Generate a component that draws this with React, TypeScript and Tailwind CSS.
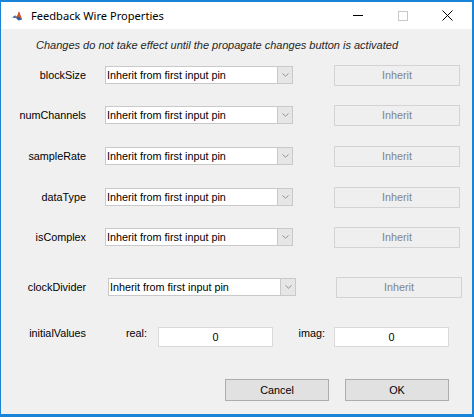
import React from "react";

const rows = [
  { label: "blockSize", mt: "mt-[13px]", shift: false },
  { label: "numChannels", mt: "mt-[19px]", shift: false },
  { label: "sampleRate", mt: "mt-[20px]", shift: false },
  { label: "dataType", mt: "mt-[20px]", shift: false },
  { label: "isComplex", mt: "mt-[19px]", shift: false },
  { label: "clockDivider", mt: "mt-[29px]", shift: true },
];

function Chevron() {
  return (
    <svg width="7" height="4" viewBox="0 0 7 4" className="block">
      <path d="M0.5 0.5 L3.5 3.2 L6.5 0.5" fill="none" stroke="#8a8a8a" strokeWidth="0.9" />
    </svg>
  );
}

function Select() {
  return (
    <div className="flex h-[18px] w-[188px] mt-[-1px] border border-[#c9c9c9] bg-white">
      <div className="flex-1 pl-[1px] leading-[16px] text-black">Inherit from first input pin</div>
      <div className="w-[15px] h-full bg-[#e6e6e6] border-l border-[#c9c9c9] flex items-center justify-center">
        <Chevron />
      </div>
    </div>
  );
}

export default function App() {
  return (
    <div
      className="w-[474px] h-[417px] bg-[#f0f0f0] border-[#1883d7] border-l border-t-2 border-r-2 border-b-[3px] flex flex-col text-[10.8px]"
      style={{ fontFamily: '"Liberation Sans", Arial, sans-serif' }}
    >
      {/* title bar */}
      <div className="h-[27px] bg-white flex items-center shrink-0">
        <div className="ml-[11px] w-[10px] h-[10px]">
          <svg width="10" height="10" viewBox="0 0 10 10" className="block">
            <path d="M0 6.5 L3 4.5 L5 5.5 L7 0.5 L10 8.5 L6.5 9.5 L4 7 Z" fill="#2c5fa8" />
            <path d="M5 5.5 L7 0.5 L10 8.5 L7.2 6 Z" fill="#e2561a" />
            <path d="M3 4.5 L5 5.5 L4 7 Z" fill="#f08a2a" />
          </svg>
        </div>
        <div
          className="ml-[9px] text-[11.1px] text-black leading-[16px]"
          style={{ fontFamily: '"Noto Sans", "Open Sans", sans-serif' }}
        >
          Feedback Wire Properties
        </div>
        <div className="flex-1" />
        <div className="w-[10px] h-[1px] bg-black mr-[35px]" />
        <div className="w-[10px] h-[10px] border border-[#c8c8c8] mr-[34px]" />
        <svg width="11" height="11" viewBox="0 0 11 11" className="block mr-[19px]">
          <path d="M0.5 0.5 L10.5 10.5 M10.5 0.5 L0.5 10.5" stroke="#000" strokeWidth="1" />
        </svg>
      </div>

      {/* subtitle */}
      <div className="mt-[10px] h-[13px] leading-[13px] pl-[35px] italic text-[11px] text-[#262626]">
        Changes do not take effect until the propagate changes button is activated
      </div>

      {rows.map((r) => (
        <div key={r.label} className={`flex items-center h-[21px] ${r.mt}`}>
          <div className="w-[85px] text-right text-black leading-[13px] mt-[-1px]">{r.label}</div>
          <div className={r.shift ? "ml-[22px]" : "ml-[19px]"}>
            <Select />
          </div>
          <div
            className={`${r.shift ? "ml-[40px]" : "ml-[41px]"} w-[126px] h-[21px] border border-[#d3d3d3] bg-[#efefef] text-[#838383] flex items-center justify-center`}
          >
            Inherit
          </div>
        </div>
      ))}

      {/* initialValues */}
      <div className="flex items-start mt-[29px] h-[20px]">
        <div className="w-[85px] text-right text-black leading-[13px]">initialValues</div>
        <div className="w-[72px] text-right pr-[11px] text-black leading-[13px]">real:</div>
        <div className="w-[115px] h-[20px] border border-[#d9d9d9] bg-white flex items-center justify-center text-black">
          0
        </div>
        <div className="w-[61px] text-right pr-[9px] text-black leading-[13px]">imag:</div>
        <div className="w-[115px] h-[20px] border border-[#d9d9d9] bg-white flex items-center justify-center text-black">
          0
        </div>
      </div>

      {/* bottom buttons */}
      <div className="flex justify-end gap-[16px] mt-[32px] pr-[23px]">
        <div className="w-[104px] h-[22px] border border-[#adadad] bg-[#e1e1e1] flex items-center justify-center text-black">
          Cancel
        </div>
        <div className="w-[104px] h-[22px] border border-[#adadad] bg-[#e1e1e1] flex items-center justify-center text-black">
          OK
        </div>
      </div>
    </div>
  );
}
